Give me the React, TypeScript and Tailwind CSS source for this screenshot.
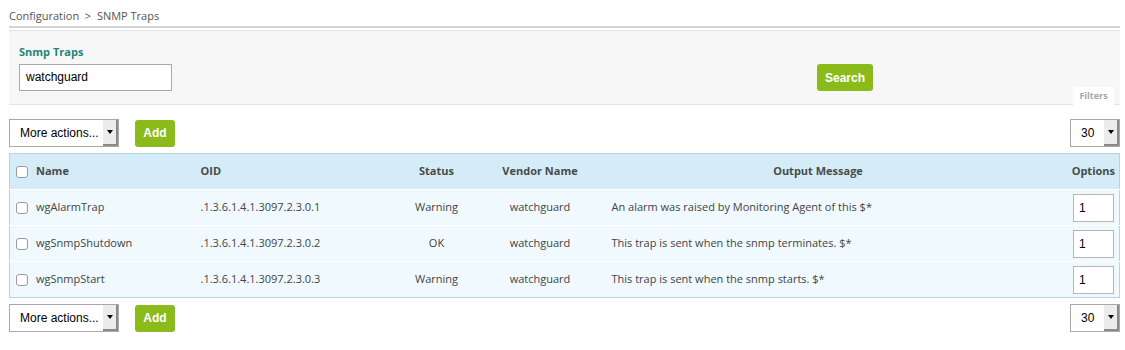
import React from "react";

type Trap = {
  name: string;
  oid: string;
  status: string;
  vendor: string;
  message: string;
};

const traps: Trap[] = [
  {
    name: "wgAlarmTrap",
    oid: ".1.3.6.1.4.1.3097.2.3.0.1",
    status: "Warning",
    vendor: "watchguard",
    message: "An alarm was raised by Monitoring Agent of this $*",
  },
  {
    name: "wgSnmpShutdown",
    oid: ".1.3.6.1.4.1.3097.2.3.0.2",
    status: "OK",
    vendor: "watchguard",
    message: "This trap is sent when the snmp terminates. $*",
  },
  {
    name: "wgSnmpStart",
    oid: ".1.3.6.1.4.1.3097.2.3.0.3",
    status: "Warning",
    vendor: "watchguard",
    message: "This trap is sent when the snmp starts. $*",
  },
];

const arial = "font-['Liberation_Sans',Arial,sans-serif]";

function Checkbox() {
  return (
    <span className="inline-block w-[12px] h-[12px] rounded-[3px] border border-[#9a9a9a] bg-white align-middle" />
  );
}

// fake select box, like the old browser style
function SelectBox({ label, width }: { label: string; width: string }) {
  return (
    <div
      className={`flex h-[28px] ${width} border border-[#a9a9a9] bg-white ${arial} text-[12px] text-black`}
    >
      <div className="flex-1 flex items-center pl-[10px]">{label}</div>
      <div className="w-[15px] flex items-center justify-center bg-[#ececec] border-r-2 border-b-2 border-[#8a8a8a]">
        <span className="block w-0 h-0 border-l-[3px] border-r-[3px] border-t-[4px] border-l-transparent border-r-transparent border-t-black" />
      </div>
    </div>
  );
}

function GreenButton({ children, className = "" }: { children: React.ReactNode; className?: string }) {
  return (
    <button
      className={`h-[27px] rounded-[3px] bg-[#8bba1b] text-white font-bold text-[12px] ${arial} ${className}`}
    >
      {children}
    </button>
  );
}

function ActionsRow() {
  return (
    <div className="flex items-center justify-between">
      <div className="flex items-center gap-[16px]">
        <SelectBox label="More actions..." width="w-[110px]" />
        <GreenButton className="w-[40px]">Add</GreenButton>
      </div>
      <SelectBox label="30" width="w-[50px]" />
    </div>
  );
}

export default function App() {
  return (
    <div className="w-[1125px] h-[350px] bg-white pl-[9px] pr-[5px] font-['Open_Sans',sans-serif] text-[#444]">
      <div className="h-[28px] flex items-center text-[11px] text-[#555] border-b-2 border-[#d3d3d3] pt-[6px]">
        Configuration&nbsp;&nbsp;&gt;&nbsp;&nbsp;SNMP Traps
      </div>

      <div className="relative mt-[2px] h-[75px] bg-[#f7f7f7] border-t border-b border-[#e4e4e4] px-[10px] pt-[13px]">
        <div className="text-[11px] font-bold text-[#23857a] leading-[16px]">Snmp Traps</div>
        <div className="flex items-center mt-[3px]">
          <div
            className={`w-[153px] h-[27px] border border-[#aaa] bg-white flex items-center pl-[6px] text-[12px] text-black ${arial}`}
          >
            watchguard
          </div>
          <GreenButton className="w-[56px] h-[25px] ml-[645px] mt-[1px]">Search</GreenButton>
        </div>
        <div className="absolute right-[6px] bottom-[-1px] w-[41px] h-[18px] bg-white flex items-center justify-center text-[9px] font-bold text-[#a5a5a5]">
          Filters
        </div>
      </div>

      <div className="mt-[14px]">
        <ActionsRow />
      </div>

      <table className="mt-[6px] w-[1111px] table-fixed border-collapse border border-[#b7d3e0] text-[11px]">
        <colgroup>
          <col className="w-[185px]" />
          <col className="w-[204px]" />
          <col className="w-[76px]" />
          <col className="w-[131px]" />
          <col className="w-[425px]" />
          <col />
        </colgroup>
        <thead>
          <tr className="h-[36px] bg-[#d3ecf7] font-bold text-[#4a4a4a]">
            <th className="text-left pl-[6px]">
              <span className="flex items-center gap-[8px]">
                <Checkbox />
                Name
              </span>
            </th>
            <th className="text-left pl-[6px]">OID</th>
            <th className="text-center">Status</th>
            <th className="text-center">Vendor Name</th>
            <th className="text-center">Output Message</th>
            <th className="text-right pr-[4px]">Options</th>
          </tr>
        </thead>
        <tbody>
          {traps.map((t) => (
            <tr key={t.name} className="h-[36px] bg-[#f0f9fe] border-t border-white">
              <td className="pl-[6px]">
                <span className="flex items-center gap-[8px]">
                  <Checkbox />
                  {t.name}
                </span>
              </td>
              <td className="pl-[6px]">{t.oid}</td>
              <td className="text-center">{t.status}</td>
              <td className="text-center">{t.vendor}</td>
              <td className="pl-[6px]">{t.message}</td>
              <td className="pr-[5px]">
                <div
                  className={`ml-auto w-[41px] h-[28px] border border-[#b5b5b5] bg-white flex items-center pl-[5px] text-[12px] text-black ${arial}`}
                >
                  1
                </div>
              </td>
            </tr>
          ))}
        </tbody>
      </table>

      <div className="mt-[6px]">
        <ActionsRow />
      </div>
    </div>
  );
}
